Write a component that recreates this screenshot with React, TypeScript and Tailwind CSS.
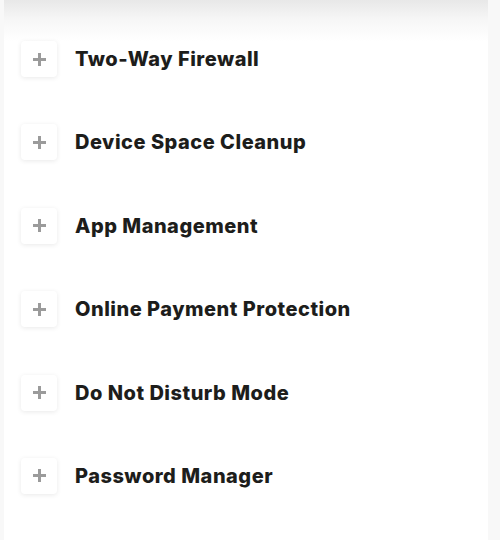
import React from "react";

const features = [
  "Two-Way Firewall",
  "Device Space Cleanup",
  "App Management",
  "Online Payment Protection",
  "Do Not Disturb Mode",
  "Password Manager",
];

const PlusBox: React.FC = () => (
  <div className="flex h-[36px] w-[36px] shrink-0 items-center justify-center rounded-[4px] bg-white shadow-[0_1px_5px_rgba(0,0,0,0.09)]">
    <svg width="13" height="13" viewBox="0 0 13 13" fill="#9b9b9b">
      <rect x="0" y="5" width="13" height="3" />
      <rect x="5" y="0" width="3" height="13" />
    </svg>
  </div>
);

const App: React.FC = () => {
  return (
    <div className="flex h-[540px] w-[500px] overflow-hidden bg-[#f8f8f8] font-['Inter',sans-serif]">
      <div className="ml-[4px] flex w-[484px] flex-col bg-white">
        <div className="h-[41px] w-full shrink-0 bg-gradient-to-b from-[#e8e8e8] via-[#f7f7f7] to-white" />
        <ul className="flex flex-col gap-[47.4px] pl-[17px]">
          {features.map((name) => (
            <li key={name} className="flex h-[36px] items-center gap-[18px]">
              <PlusBox />
              <span className="text-[20px] font-extrabold tracking-[0.5px] text-[#1d1d1b]">{name}</span>
            </li>
          ))}
        </ul>
      </div>
    </div>
  );
};

export default App;
